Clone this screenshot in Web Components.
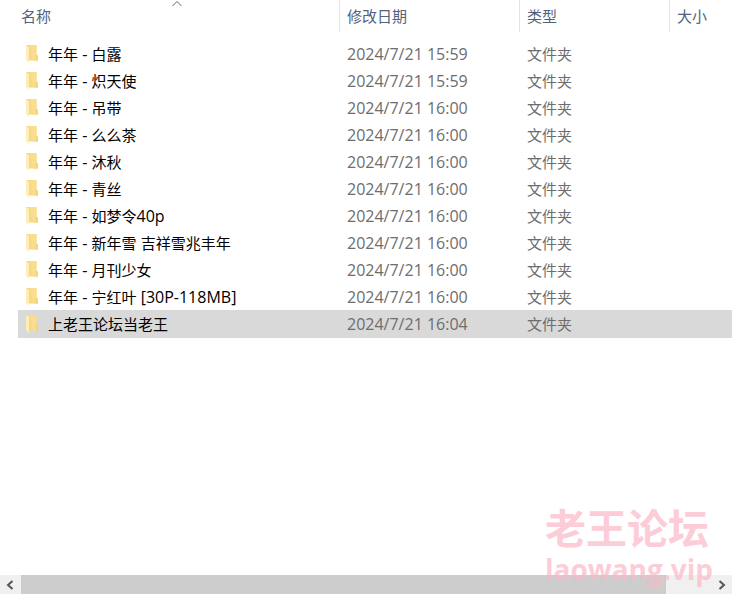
<!DOCTYPE html>
<html lang="zh-CN">
<head>
<meta charset="UTF-8">
<meta name="viewport" content="width=device-width, initial-scale=1.0">
<title>文件夹</title>
<style>
    body {
        margin: 0;
        background: #fff;
        font-family: "Open Sans", "Noto Sans CJK SC", sans-serif;
        font-size: 15px;
    }
</style>
</head>
<body>
<file-explorer>
    <file-list></file-list>
    <scroll-bar slot="footer"></scroll-bar>
    <water-mark slot="mark" name="老王论坛">laowang.vip</water-mark>
</file-explorer>

<script>
    const FOLDERS = [
        { name: '年年 - 白露', date: '2024/7/21 15:59' },
        { name: '年年 - 炽天使', date: '2024/7/21 15:59' },
        { name: '年年 - 吊带', date: '2024/7/21 16:00' },
        { name: '年年 - 么么茶', date: '2024/7/21 16:00' },
        { name: '年年 - 沐秋', date: '2024/7/21 16:00' },
        { name: '年年 - 青丝', date: '2024/7/21 16:00' },
        { name: '年年 - 如梦令40p', date: '2024/7/21 16:00' },
        { name: '年年 - 新年雪 吉祥雪兆丰年', date: '2024/7/21 16:00' },
        { name: '年年 - 月刊少女', date: '2024/7/21 16:00' },
        { name: '年年 - 宁红叶 [30P-118MB]', date: '2024/7/21 16:00' },
        { name: '上老王论坛当老王', date: '2024/7/21 16:04', selected: true }
    ];

    class FileExplorer extends HTMLElement {
        constructor() {
            super();
            this.attachShadow({ mode: 'open' });
        }

        connectedCallback() {
            this.shadowRoot.innerHTML = `
                <style>
                    :host {
                        display: flex;
                        flex-direction: column;
                        position: relative;
                        box-sizing: border-box;
                        min-height: 100vh;
                        padding-bottom: 1px;
                        overflow: hidden;
                    }
                    main {
                        flex: 1;
                    }
                </style>
                <main><slot></slot></main>
                <slot name="footer"></slot>
                <slot name="mark"></slot>
            `;
        }
    }

    class FolderIcon extends HTMLElement {
        constructor() {
            super();
            this.attachShadow({ mode: 'open' });
        }

        connectedCallback() {
            this.shadowRoot.innerHTML = `
                <style>
                    :host {
                        display: block;
                        width: 14px;
                        height: 19px;
                    }
                    svg {
                        display: block;
                    }
                </style>
                <svg width="14" height="19" viewBox="0 0 14 19" aria-hidden="true">
                    <path d="M1 0H11.5V10L13 11V15.5H3L1 14Z" fill="#f6d981"/>
                    <path d="M5 0H11.5V10L13 11V15.5H8Z" fill="#f9de8f"/>
                    <path d="M10.5 10H11.5L13 11V15.5H10.5Z" fill="#f5d47c"/>
                    <path d="M1 0L4 2V18L1 15Z" fill="#fdedbb"/>
                </svg>
            `;
        }
    }

    class FileList extends HTMLElement {
        constructor() {
            super();
            this.attachShadow({ mode: 'open' });
        }

        connectedCallback() {
            this.render();
        }

        // Latin runs are set one size up so they balance with the Chinese text
        label(text) {
            return text.replace(/[ -~]+/g, '<span class="latin">$&</span>');
        }

        render() {
            const rows = FOLDERS.map(item => `
                <tr class="${item.selected ? 'selected' : ''}">
                    <td><div class="name"><folder-icon></folder-icon><span>${this.label(item.name)}</span></div></td>
                    <td class="date">${item.date}</td>
                    <td>文件夹</td>
                    <td></td>
                </tr>
            `).join('');

            this.shadowRoot.innerHTML = `
                <style>
                    :host {
                        display: block;
                        padding-left: 18px;
                    }
                    table {
                        width: 100%;
                        table-layout: fixed;
                        border-collapse: separate;
                        border-spacing: 0;
                    }
                    .col-name { width: 322px; }
                    .col-date { width: 180px; }
                    .col-type { width: 150px; }
                    th {
                        position: relative;
                        box-sizing: border-box;
                        height: 32px;
                        padding: 0 7px;
                        border-right: 1px solid #e2e4e6;
                        color: #53617a;
                        font-weight: normal;
                        line-height: 20px;
                        text-align: left;
                    }
                    th:first-child {
                        padding-left: 3px;
                    }
                    th:last-child {
                        border-right: 0;
                    }
                    .sort {
                        position: absolute;
                        top: 0;
                        left: 50%;
                        margin-left: -8px;
                    }
                    tbody::before {
                        content: "";
                        display: block;
                        height: 9px;
                    }
                    td {
                        height: 27px;
                        padding: 0 7px;
                        color: #6d6d6d;
                        line-height: 27px;
                        white-space: nowrap;
                    }
                    td:first-child {
                        color: #000;
                    }
                    .date,
                    .latin {
                        font-size: 16px;
                    }
                    .latin {
                        line-height: 1;
                        white-space: pre;
                    }
                    .name {
                        display: flex;
                        align-items: center;
                        gap: 9px;
                        height: 27px;
                    }
                    .selected {
                        background: #d9d9d9;
                        box-shadow: 0 -1px 0 #d9d9d9;
                    }
                </style>
                <table>
                    <colgroup>
                        <col class="col-name">
                        <col class="col-date">
                        <col class="col-type">
                        <col>
                    </colgroup>
                    <thead>
                        <tr>
                            <th aria-sort="ascending">名称
                                <svg class="sort" width="12" height="8" viewBox="0 0 12 8" aria-hidden="true">
                                    <path d="M1.5 6L6 1.5L10.5 6" fill="none" stroke="#666" stroke-width="1"/>
                                </svg>
                            </th>
                            <th>修改日期</th>
                            <th>类型</th>
                            <th>大小</th>
                        </tr>
                    </thead>
                    <tbody>${rows}</tbody>
                </table>
            `;
        }
    }

    class ScrollBar extends HTMLElement {
        constructor() {
            super();
            this.attachShadow({ mode: 'open' });
        }

        connectedCallback() {
            this.shadowRoot.innerHTML = `
                <style>
                    :host {
                        display: flex;
                        height: 19px;
                        background: #f0f0f0;
                    }
                    button {
                        display: flex;
                        align-items: center;
                        justify-content: center;
                        width: 21px;
                        padding: 0;
                        border: 0;
                        background: none;
                    }
                    .track {
                        flex: 1;
                    }
                    .thumb {
                        width: 93.5%;
                        height: 100%;
                        background: #cdcdcd;
                    }
                </style>
                <button type="button" aria-label="向左滚动">
                    <svg width="9" height="10" viewBox="0 0 9 10"><path d="M6.5 1L2 5L6.5 9" fill="none" stroke="#555" stroke-width="2"/></svg>
                </button>
                <div class="track"><div class="thumb"></div></div>
                <button type="button" aria-label="向右滚动">
                    <svg width="9" height="10" viewBox="0 0 9 10"><path d="M2.5 1L7 5L2.5 9" fill="none" stroke="#555" stroke-width="2"/></svg>
                </button>
            `;
        }
    }

    class WaterMark extends HTMLElement {
        constructor() {
            super();
            this.attachShadow({ mode: 'open' });
        }

        connectedCallback() {
            this.shadowRoot.innerHTML = `
                <style>
                    :host {
                        display: block;
                        position: absolute;
                        right: 19px;
                        bottom: 6px;
                        color: #fcb9c7;
                        font-weight: bold;
                        opacity: 0.7;
                        pointer-events: none;
                    }
                    .name {
                        font-size: 41px;
                        line-height: 42px;
                    }
                    .site {
                        font-size: 28px;
                        line-height: 40px;
                    }
                </style>
                <div class="name">${this.getAttribute('name')}</div>
                <div class="site"><slot></slot></div>
            `;
        }
    }

    customElements.define('folder-icon', FolderIcon);
    customElements.define('file-list', FileList);
    customElements.define('scroll-bar', ScrollBar);
    customElements.define('water-mark', WaterMark);
    customElements.define('file-explorer', FileExplorer);
</script>
</body>
</html>
